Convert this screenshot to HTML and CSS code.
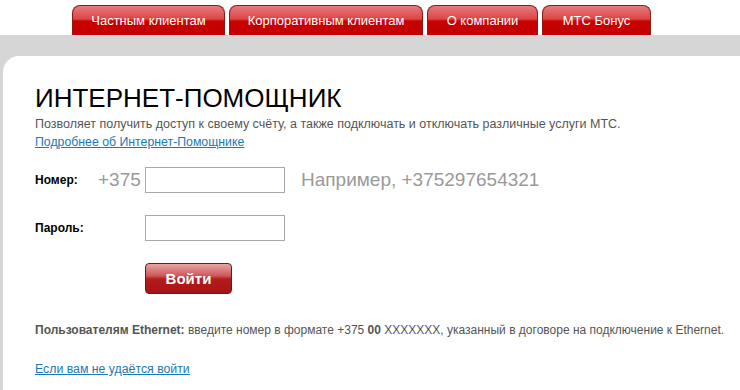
FILE: index.html
```html
<!DOCTYPE html>
<html>
<head>
    <meta charset="UTF-8">
    <title>МТС - Интернет-Помощник</title>
    <link rel="stylesheet" href="styles.css">
</head>
<body>
    <div class="tabs">
        <a class="tab tab-private" href="#">Частным клиентам</a>
        <a class="tab tab-corp" href="#">Корпоративным клиентам</a>
        <a class="tab tab-about" href="#">О компании</a>
        <a class="tab tab-bonus" href="#">МТС Бонус</a>
    </div>

    <div class="band">
        <div class="card">
            <h1>ИНТЕРНЕТ-ПОМОЩНИК</h1>
            <p class="lead">Позволяет получить доступ к своему счёту, а также подключать и отключать различные услуги МТС.</p>
            <a class="link" href="#">Подробнее об Интернет-Помощнике</a>

            <form class="login" onsubmit="return false;">
                <div class="row">
                    <label class="label label-phone">Номер:</label>
                    <span class="prefix">+375</span>
                    <input class="field" type="text">
                    <span class="hint">Например, +375297654321</span>
                </div>
                <div class="row">
                    <label class="label label-pass">Пароль:</label>
                    <input class="field" type="password">
                </div>
                <div class="row">
                    <span class="label label-pass"></span>
                    <button class="login-btn" type="submit">Войти</button>
                </div>
            </form>

            <p class="note"><b>Пользователям Ethernet:</b> введите номер в формате +375 <b>00</b> XXXXXXX, указанный в договоре на подключение к Ethernet.</p>
            <a class="link" href="#">Если вам не удаётся войти</a>
        </div>
    </div>
</body>
</html>
```

FILE: styles.css
```css
body {
    margin: 0;
    font-family: "Liberation Sans", Arial, sans-serif;
    background: #fff;
}
.tabs {
    display: flex;
    gap: 4px;
    padding: 5px 0 0 72px;
    height: 30px;
}
.tab {
    box-sizing: border-box;
    height: 30px;
    padding-top: 7px;
    text-align: center;
    color: #fff;
    font-size: 13px;
    text-decoration: none;
    border: 1px solid #8e1a1a;
    border-bottom: none;
    border-radius: 8px 8px 0 0;
    background: linear-gradient(to bottom, #e67c7c 0%, #dc4545 45%, #c90000 52%, #c40000 100%);
}
.tab-private { width: 153px; }
.tab-corp { width: 194px; }
.tab-about { width: 111px; }
.tab-bonus { width: 109px; }
.band {
    background: #d6d6d6;
    padding: 21px 0 0 3px;
}
.card {
    background: #fff;
    border-top-left-radius: 16px;
    padding: 27px 0 20px 32px;
}
h1 {
    margin: 0 0 4px 0;
    font-size: 26px;
    line-height: 30px;
    font-weight: normal;
    color: #000;
}
.lead {
    margin: 0;
    font-size: 12.5px;
    line-height: 15px;
    color: #555;
}
.link {
    font-size: 12.3px;
    line-height: 15px;
    color: #1a79b6;
}
.login {
    margin-top: 17px;
}
.row {
    display: flex;
    align-items: center;
    margin-bottom: 22px;
}
.label {
    font-size: 12px;
    font-weight: bold;
    color: #000;
}
.label-phone { width: 63px; }
.label-pass { width: 110px; }
.prefix {
    width: 47px;
    font-size: 19px;
    color: #999;
}
.field {
    box-sizing: border-box;
    width: 140px;
    height: 26px;
    margin: 0;
    border: 1px solid #aaa;
    padding: 2px 4px;
}
.hint {
    margin-left: 16px;
    font-size: 19px;
    color: #999;
}
.login-btn {
    box-sizing: border-box;
    width: 87px;
    height: 31px;
    border: 1px solid #7a1212;
    border-radius: 4px;
    color: #fff;
    font-family: "Liberation Sans", Arial, sans-serif;
    font-size: 15px;
    font-weight: bold;
    cursor: pointer;
    background: linear-gradient(to bottom, #e8a5a5 0%, #cf5a5a 40%, #b51c1c 52%, #a51414 100%);
}
.note {
    margin: 28px 0 21px 0;
    font-size: 12px;
    line-height: 16px;
    color: #555;
}
```
